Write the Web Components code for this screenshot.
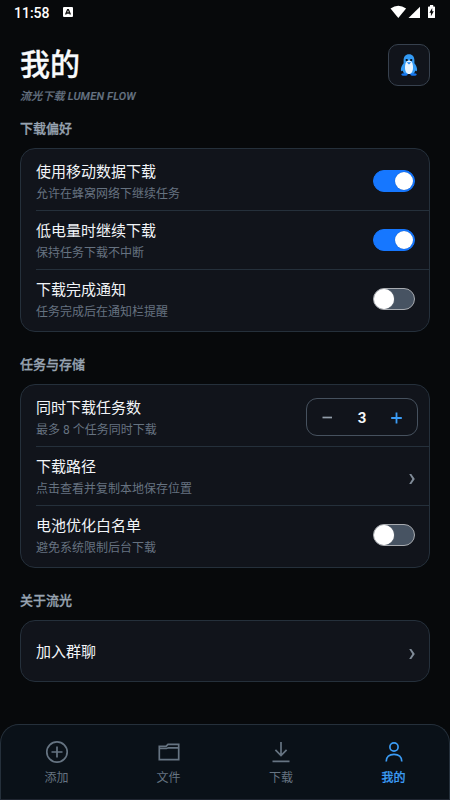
<!DOCTYPE html>
<html lang="zh-CN">
<head>
<meta charset="utf-8">
<title>我的</title>
<style>
html,body{margin:0;height:100%;background:#07090b}
body{font-family:Roboto,"Noto Sans CJK SC",sans-serif;color:#f4f7fa;overflow:hidden}
</style>
</head>
<body>
<lumen-app>
  <status-bar slot="status">11:58</status-bar>
  <page-header slot="header" heading="我的">流光下载 LUMEN FLOW</page-header>
  <setting-group label="下载偏好">
    <setting-row heading="使用移动数据下载" note="允许在蜂窝网络下继续任务"><toggle-switch on></toggle-switch></setting-row>
    <setting-row heading="低电量时继续下载" note="保持任务下载不中断"><toggle-switch on></toggle-switch></setting-row>
    <setting-row last heading="下载完成通知" note="任务完成后在通知栏提醒"><toggle-switch></toggle-switch></setting-row>
  </setting-group>
  <setting-group label="任务与存储">
    <setting-row heading="同时下载任务数" note="最多 8 个任务同时下载"><number-stepper>3</number-stepper></setting-row>
    <setting-row heading="下载路径" note="点击查看并复制本地保存位置"><chevron-mark></chevron-mark></setting-row>
    <setting-row last heading="电池优化白名单" note="避免系统限制后台下载"><toggle-switch></toggle-switch></setting-row>
  </setting-group>
  <setting-group label="关于流光" single>
    <setting-row last heading="加入群聊"><chevron-mark></chevron-mark></setting-row>
  </setting-group>
  <tab-bar slot="tabs">
    <tab-item icon="add">添加</tab-item>
    <tab-item icon="folder">文件</tab-item>
    <tab-item icon="download">下载</tab-item>
    <tab-item icon="user" active>我的</tab-item>
  </tab-bar>
</lumen-app>
<script>
const define = (name, render) => customElements.define(name, class extends HTMLElement {
  constructor() {
    super();
    this.attachShadow({ mode: 'open' }).innerHTML = render(this);
  }
});

define('lumen-app', () => `<style>
:host{display:grid;grid-template-rows:24px 90px 1fr 76px;width:450px;height:800px}
main{min-height:0;padding:0 20px}
</style><slot name="status"></slot><slot name="header"></slot><main><slot></slot></main><slot name="tabs"></slot>`);

define('status-bar', () => `<style>
:host{display:flex;align-items:center;height:24px;box-sizing:border-box;padding:0 14px;font-size:14px;font-weight:500;line-height:24px;color:#fff}
span{padding-top:2px}
.badge{margin-left:13px}
.right{margin-left:auto}
svg{display:block}
</style><span><slot></slot></span>
<svg class="badge" width="10" height="10" viewBox="0 0 10 10"><rect width="10" height="10" rx="1" fill="#fff"/><path d="M2.600 7.600 4.600 2.600h.8l2 5M3.500 6h3" fill="none" stroke="#111" stroke-width="1.300"/></svg>
<svg class="right" width="46" height="14" viewBox="390 5 46 14" fill="#fff"><path d="M390.500 8.500Q398.300 3 406.100 8.500L398.300 18Z"/><path d="M408.500 18 420 6.800V18Z"/><path d="M430 5h3.200v1.400h1.200q.6 0 .6.6V17.500q0 .6-.6.600h-5.700q-.7 0-.7-.6V7q0-.6.7-.6h1.300Z"/><path d="M432.200 8 429.400 12.700h1.500v3.500l2.900-4.900h-1.600Z" fill="#07090b"/></svg>`);

define('page-header', el => `<style>
:host{display:flex;justify-content:space-between;box-sizing:border-box;padding:20px 20px 0;height:90px}
h1{margin:0;font-size:30px;line-height:42px;font-weight:500;color:#f8fafc;-webkit-text-stroke:.3px}
p{margin:3px 0 0;font-size:11px;line-height:15px;font-weight:500;font-style:italic;letter-spacing:.2px;color:#667382;-webkit-text-stroke:.2px}
.logo{box-sizing:border-box;width:42px;height:42px;border:1px solid #37414e;border-radius:10px;background:#11141b;display:grid;place-items:center}
svg{display:block}
</style><div><h1>${el.getAttribute('heading')}</h1><p><slot></slot></p></div>
<div class="logo"><svg width="20" height="24" viewBox="0 0 20 24">
<path d="M10 1.200C6.500 1.200 4.600 3.800 4.600 7.200v3C3 12.200 1.800 14.600 1.900 16.800c0 1.500 1 1.800 1.800.7.400 1.600 1 2.700 2 3.500h8.600c1-.8 1.600-1.900 2-3.500.8 1.100 1.800.8 1.800-.7.100-2.200-1.100-4.600-2.700-6.600v-3C15.400 3.800 13.500 1.200 10 1.200Z" fill="#349bf5"/>
<path d="M10 7.500c-2.800 0-4 3-4 7S7.600 21 10 21s4-2.500 4-6.500S12.800 7.500 10 7.500Z" fill="#e8f4ff"/>
<ellipse cx="5.500" cy="21.500" rx="3.200" ry="1.300" fill="#1677f0"/><ellipse cx="14.500" cy="21.500" rx="3.200" ry="1.300" fill="#1677f0"/>
<rect x="6.700" y="6" width="2" height="2" rx=".5" fill="#0a1622"/><rect x="11.200" y="6" width="2" height="2" rx=".5" fill="#0a1622"/>
<path d="M7.800 9.200h4.400L10 11.500Z" fill="#1683f5"/></svg></div>`);

define('setting-group', el => `<style>
:host{display:block;height:236px}
:host([single]){height:96px}
h2{margin:0;height:34px;padding:5px 0 0;box-sizing:border-box;font-size:13px;line-height:20px;font-weight:500;color:#97a3b1;-webkit-text-stroke:.3px}
section{box-sizing:border-box;height:184px;padding:3px 0 2px;border:1px solid #25303b;border-radius:15px;background:#11141b}
section.single{height:62px;padding:0}
</style><h2>${el.getAttribute('label')}</h2><section class="${el.hasAttribute('single') ? 'single' : ''}"><slot></slot></section>`);

define('setting-row', el => `<style>
:host{display:flex;align-items:center;justify-content:space-between;box-sizing:border-box;height:59px;margin-left:15px;padding-right:14px;border-bottom:1px solid #25303b}
:host([last]){border-bottom-color:transparent}
:host(:not([note])){height:60px;border:0}
:host([note]) div{padding-top:3px}
:host(:not([note])) div{padding-top:2px}
h3{margin:0;font-size:15px;line-height:22px;font-weight:400;color:#f1f4f8}
p{margin:1px 0 0;font-size:12px;line-height:20px;color:#667280}
</style><div><h3>${el.getAttribute('heading')}</h3>${el.hasAttribute('note') ? `<p>${el.getAttribute('note')}</p>` : ''}</div><slot></slot>`);

define('toggle-switch', () => `<style>
:host{display:flex;box-sizing:border-box;width:42px;height:22px;border-radius:11px;border:1px solid #a8abb0;background:#475362}
i{width:20px;height:20px;border-radius:50%;background:#fff;box-shadow:0 0 1px #ccc}
:host([on]){background:#1677ff;border-color:#1677ff;justify-content:flex-end}
:host([on]) i{width:18.500px;height:18.500px;margin:.6px 1px 0 0;box-shadow:0 0 1px #0b4dab}
</style><i></i>`);

define('number-stepper', () => `<style>
:host{display:flex;align-items:center;justify-content:space-between;box-sizing:border-box;width:112px;height:38px;margin-right:-3px;padding:0 14px;border:1px solid #46515e;border-radius:11px;font-size:15px;font-weight:700;color:#f5f7fa}
svg{display:block}
span{padding-top:1px}
</style><svg width="13" height="13"><path d="M1.500 6.500h9.500" stroke="#929daa" stroke-width="1.700"/></svg><span><slot></slot></span><svg width="13" height="13"><path d="M1.200 7h10.600M6.500 1.500v11" stroke="#3b9cf5" stroke-width="1.800"/></svg>`);

define('chevron-mark', () => `<style>
:host{display:block;padding-top:5px}svg{display:block}
</style><svg width="6" height="12" viewBox="0 0 6 12"><path d="M.2 1H2.300L5.800 6 2.300 11H.2L3.300 6Z" fill="#7f8a97"/></svg>`);

define('tab-bar', () => `<style>
:host{display:grid;grid-template-columns:repeat(4,1fr);box-sizing:border-box;height:76px;margin:0;border:1px solid #25303b;border-bottom-color:#202631;border-radius:19px 19px 0 0;background:#0a1118}
</style><slot></slot>`);

const icons = {
  add: '<circle cx="12" cy="12" r="10.200"/><path d="M6.500 12h11M12 6.500v11"/>',
  folder: '<path d="M2.300 6.300H9L11 4.300h10.700v15.300H2.300ZM2.300 8.500H9.500L11.500 7.800H21.700"/>',
  download: '<path d="M12 2v13.200M6.400 9.900l5.600 5.600 5.600-5.600M3.500 21.300h17"/>',
  user: '<circle cx="12" cy="7" r="4.100"/><path d="M4.200 21.500C4.200 17 7.300 14.300 12 14.300s7.800 2.700 7.800 7.200"/>'
};
define('tab-item', el => `<style>
:host{display:flex;flex-direction:column;align-items:center;padding-top:15px;font-size:12px;line-height:18px;color:#667482}
:host([active]){padding-left:1px;color:#3b9cf5;font-weight:500;-webkit-text-stroke:.2px}
:host([icon="add"]),:host([icon="folder"]){padding-right:1px}
svg{display:block;margin-bottom:5px;fill:none;stroke:currentColor;stroke-width:1.700}
</style><svg width="24" height="24" viewBox="0 0 24 24">${icons[el.getAttribute('icon')]}</svg><span><slot></slot></span>`);
</script>
</body>
</html>
